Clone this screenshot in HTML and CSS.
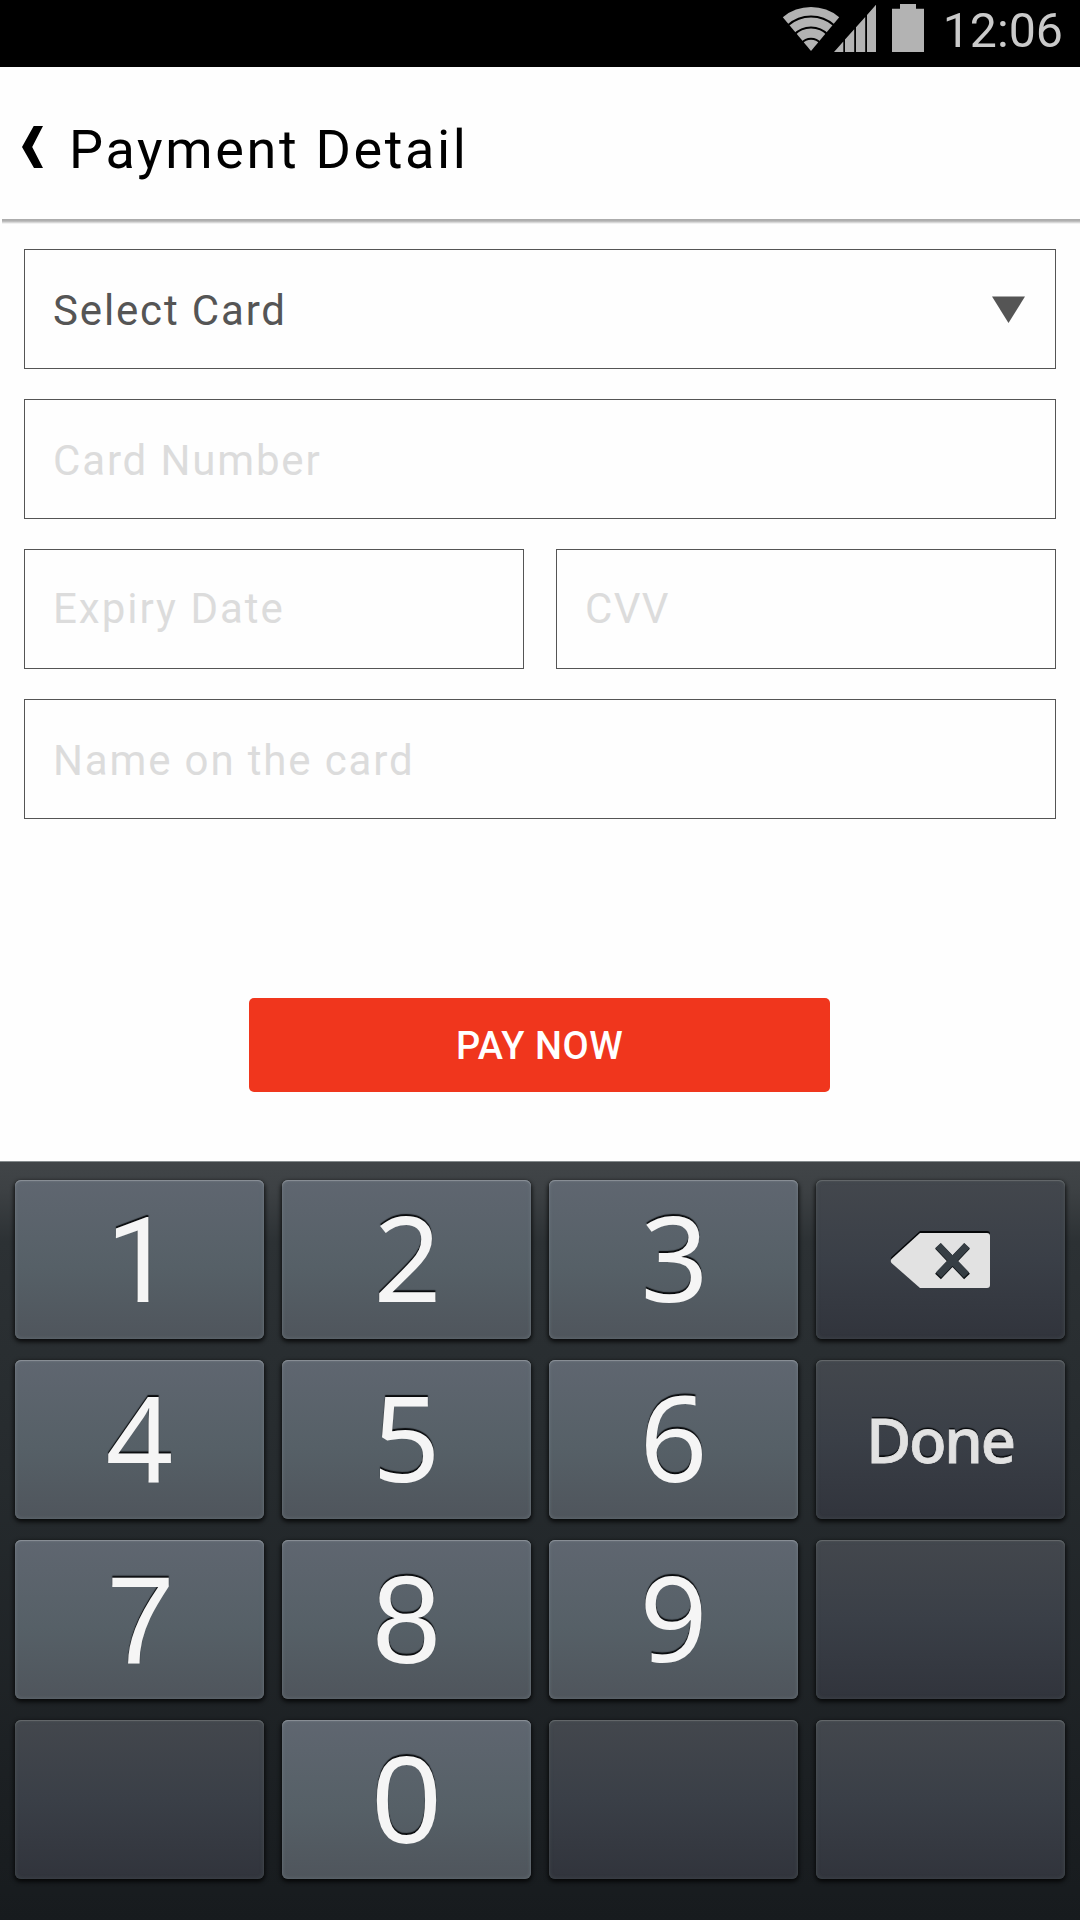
FILE: index.html
```html
<!DOCTYPE html>
<html lang="en">
<head>
<meta charset="utf-8">
<title>Payment Detail</title>
<link rel="stylesheet" href="styles.css">
</head>
<body>
<div class="screen">
  <div class="status-bar">
    <svg class="status-icons" width="141" height="48" viewBox="0 0 141 48" fill="#b3b3b3">
      <path d="M28 47 L-0.2 13.2 A44 44 0 0 1 56.2 13.2 Z"/>
      <g fill="none" stroke="#000" stroke-width="2">
        <path d="M5 21.3 A34.5 34.5 0 0 1 51 21.3"/>
        <path d="M11 30.8 A23.5 23.5 0 0 1 45 30.8"/>
        <path d="M18.5 39.2 A12.3 12.3 0 0 1 37.5 39.2"/>
      </g>
      <path d="M51 48 L60.3 37.5 V48 Z M62 48 V35.6 L71.2 25.3 V48 Z M73 48 V23.3 L82.2 13 V48 Z M84 48 V11 L93 0.8 V48 Z"/>
      <path d="M109 48 V4.7 H117 V0 H133 V4.7 H141 V48 Z"/>
    </svg>
    <span class="clock">12:06</span>
  </div>

  <header class="header">
    <svg class="back" width="22" height="42" viewBox="0 0 22 42"><path d="M11.7 0 H21 L10.2 21 L21 42 H12 L0 21 Z"/></svg>
    <h1 class="title">Payment Detail</h1>
  </header>
  <div class="header-shadow"></div>

  <main class="form">
    <div class="field select">
      <span>Select Card</span>
      <svg width="33" height="27" viewBox="0 0 33 27"><path d="M0 0.5 H33 L16.5 27 Z" fill="#555"/></svg>
    </div>
    <div class="field"><span>Card Number</span></div>
    <div class="row">
      <div class="field short"><span>Expiry Date</span></div>
      <div class="field short cvv"><span>CVV</span></div>
    </div>
    <div class="field"><span>Name on the card</span></div>
    <button class="pay">PAY NOW</button>
  </main>

  <div class="keyboard">
    <div class="key one">1</div>
    <div class="key two">2</div>
    <div class="key three">3</div>
    <div class="key dark icon">
      <svg width="100" height="58" viewBox="0 0 100 58">
        <path fill="#050709" d="M30 0 H97 Q100 0 100 3 V52 Q100 55 97 55 H30 L1.5 30 Q0 28 1.5 26 Z"/>
        <path fill="#e2e2e2" d="M30 2 H97 Q100 2 100 5 V54 Q100 57 97 57 H30 L1.5 32 Q0 30 1.5 28 Z"/>
        <path stroke="#101417" stroke-width="8" d="M48 15 L77 45.5 M77 15 L48 45.5"/>
        <path stroke="#363e44" stroke-width="7.5" d="M48 14.5 L76.5 44 M77 14.5 L48.5 44"/>
      </svg>
    </div>
    <div class="key four">4</div>
    <div class="key">5</div>
    <div class="key">6</div>
    <div class="key dark done">Done</div>
    <div class="key round seven">7</div>
    <div class="key round">8</div>
    <div class="key">9</div>
    <div class="key dark"></div>
    <div class="key dark"></div>
    <div class="key round">0</div>
    <div class="key dark"></div>
    <div class="key dark"></div>
  </div>
</div>
</body>
</html>
```
FILE: styles.css
```css
* { box-sizing: border-box; }

body {
  margin: 0;
  background: #fefefe;
  font-family: Roboto, "Liberation Sans", sans-serif;
}

svg { display: block; flex: none; }

.screen {
  width: 1080px;
  height: 1920px;
  display: flex;
  flex-direction: column;
  overflow: hidden;
}

.status-bar {
  height: 67px;
  flex: none;
  background: #000;
  display: flex;
  justify-content: flex-end;
  align-items: flex-start;
  padding: 4px 17px 0 0;
}

.status-icons { margin-right: 18.5px; overflow: visible; }

.clock {
  color: #cacaca;
  font-size: 48.3px;
  line-height: 53px;
}

.header {
  height: 152px;
  flex: none;
  display: flex;
  align-items: center;
  padding: 8px 0 0 22px;
}

.back { margin-top: -1px; }

.title {
  margin: 5px 0 0 25px;
  font-size: 54px;
  font-weight: 400;
  letter-spacing: 2.65px;
  color: #000;
}

.header-shadow {
  height: 5px;
  flex: none;
  margin-left: 2px;
  background: linear-gradient(#aaa 0, #b2b2b2 40%, #fefefe 100%);
}

.form {
  height: 937px;
  flex: none;
  display: flex;
  flex-direction: column;
  gap: 30px;
  padding: 25px 24px 0;
}

.row {
  display: grid;
  grid-template-columns: 1fr 1fr;
  gap: 32px;
}

.field {
  height: 120px;
  flex: none;
  border: 1px solid #555;
  display: flex;
  align-items: center;
  justify-content: space-between;
  padding: 3px 30px 0 28px;
  font-size: 42px;
  letter-spacing: 1.85px;
  color: #dcdcdc;
}

.field.short { padding-top: 0; padding-bottom: 1px; letter-spacing: 2px; }
.field.cvv { letter-spacing: 1.3px; }
.field.select { color: #555; }
.field.select svg { margin-top: -3px; }

.pay {
  width: 581px;
  height: 94px;
  margin: 149px auto 0 225px;
  padding: 2px 0 0;
  border: 0;
  border-radius: 5px;
  background: #f0361d;
  color: #fff;
  font: 500 38px Roboto, sans-serif;
  letter-spacing: .5px;
}

.keyboard {
  flex: 1;
  border-top: 1px solid #858b8d;
  background: linear-gradient(#414548 0, #3d4144 28px, #2c3134 80px, #262b2e 300px, #1b1f22 640px, #171b1e 100%);
  display: grid;
  grid-template-columns: repeat(4, 249px);
  grid-auto-rows: 159px;
  gap: 21px 18px;
  padding: 18px 15px 0;
}

.key {
  border-radius: 6px;
  background: linear-gradient(#5f6670, #566067 55%, #4f555c);
  box-shadow:
    inset 0 1px 1px #8b9198,
    inset 0 0 4px rgba(130, 145, 150, .45),
    0 2px 4px 1px rgba(0, 0, 0, .75);
  display: flex;
  align-items: center;
  justify-content: center;
  padding-bottom: 6px;
  font: 400 119px/1 "Noto Sans", sans-serif;
  color: #f5f5f5;
  text-shadow: 0 -2px 1px #090b0d;
}

.key.one { font-family: Roboto, sans-serif; padding: 4px 0 0; }
.key.two { padding-left: 2px; }
.key.three { padding-left: 2px; }
.key.four { font-size: 118px; }

.key.round {
  padding: 0;
  font-family: "Liberation Sans", sans-serif;
  font-size: 124px;
}

.key.round.seven { padding-left: 2px; }

.key.dark {
  background: linear-gradient(#43474d, #3a3f47 50%, #31343c);
  box-shadow:
    inset 0 1px 1px #656a6c,
    inset 0 0 4px rgba(90, 105, 105, .4),
    0 2px 4px 1px rgba(0, 0, 0, .75);
}

.key.done {
  padding: 0 1px 0 0;
  font-size: 61.5px;
  font-weight: 500;
  letter-spacing: -2.2px;
  color: #e2e2e2;
  -webkit-text-stroke: .8px #e2e2e2;
}

.key.icon { padding: 1px 1px 0 0; }
```
